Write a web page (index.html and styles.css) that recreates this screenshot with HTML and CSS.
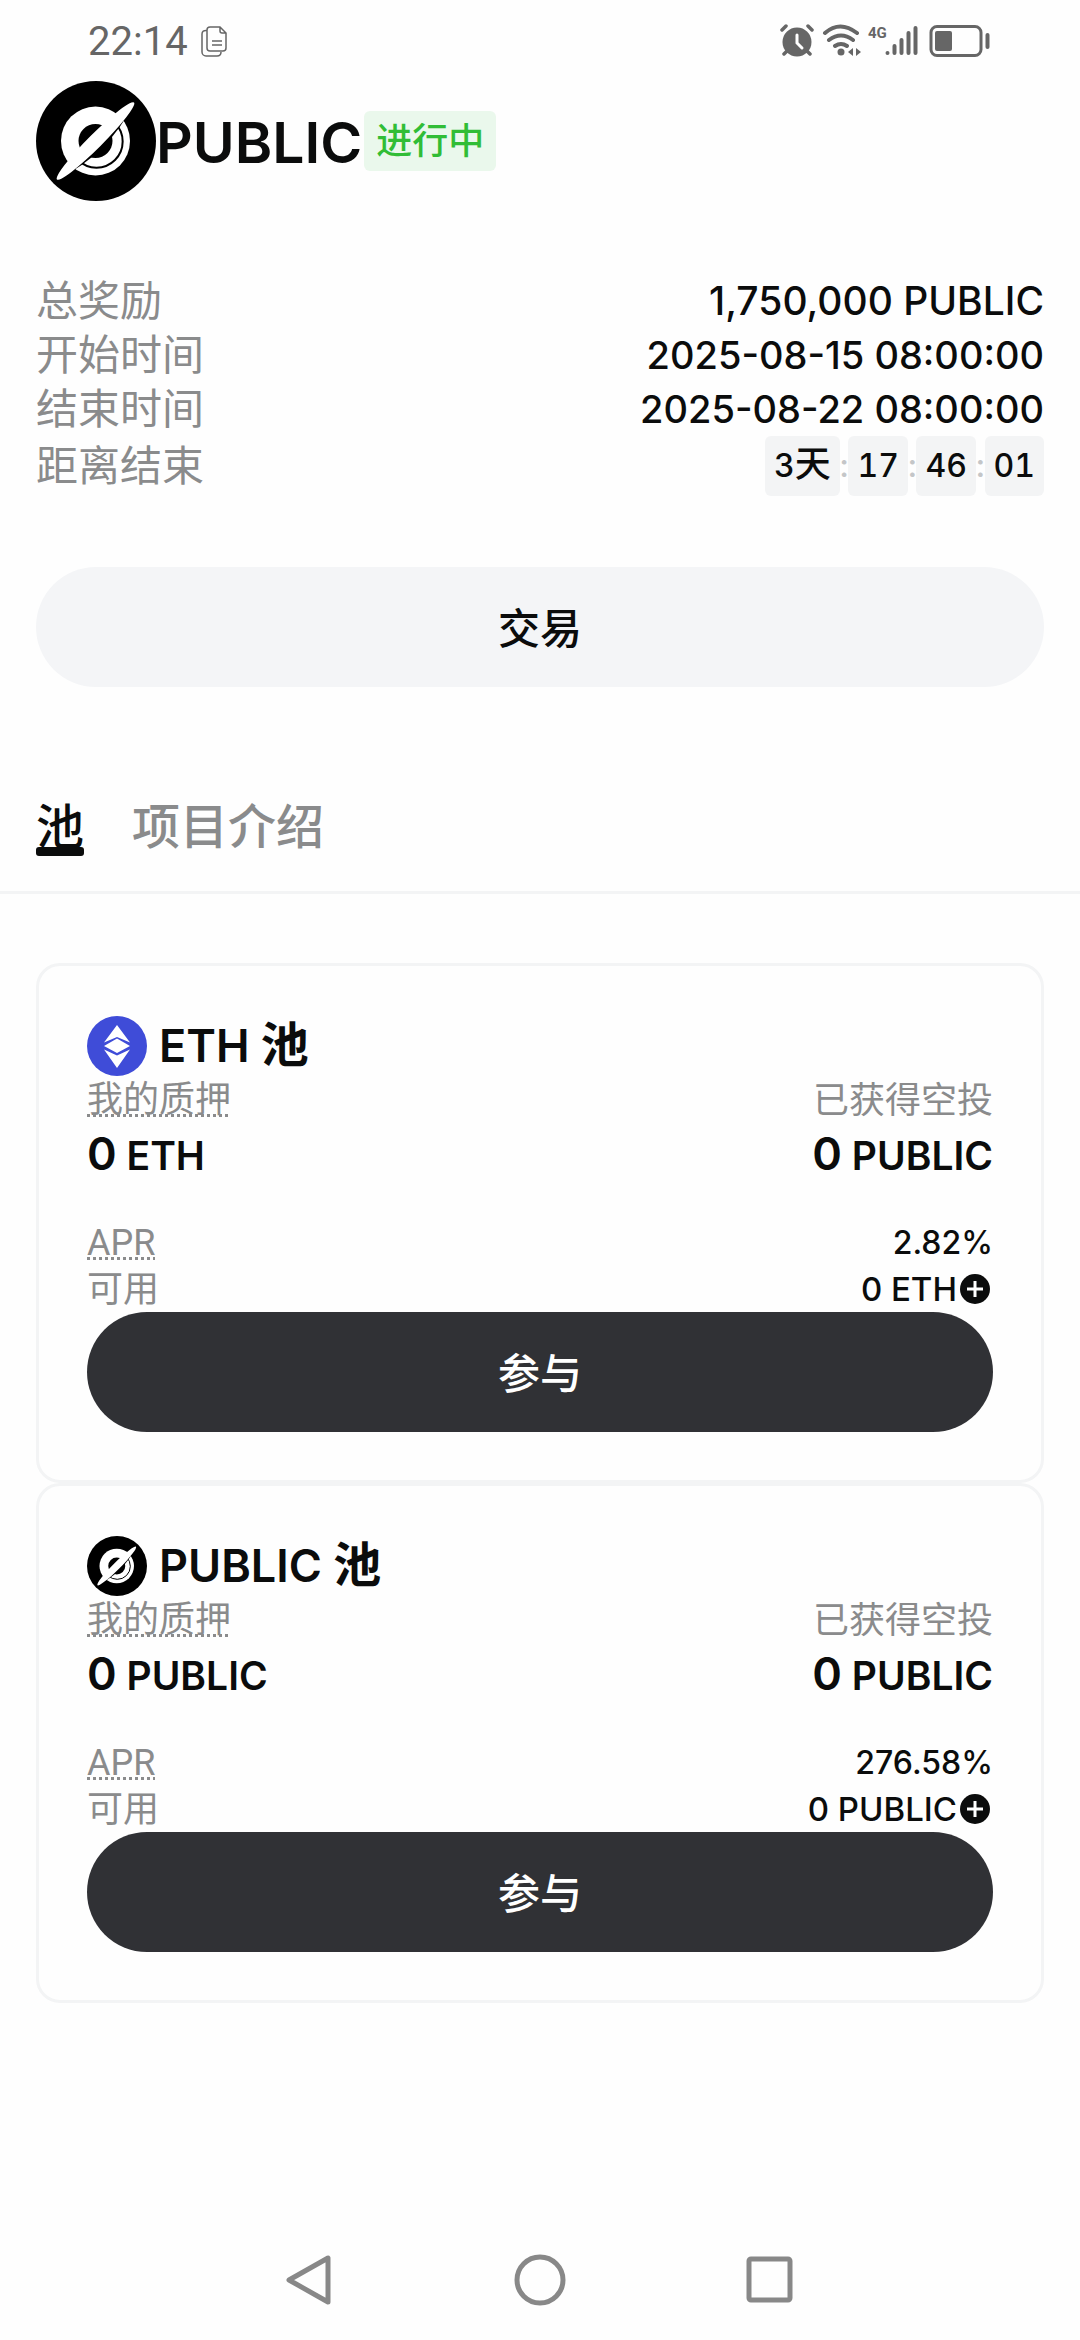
FILE: index.html
```html
<!DOCTYPE html>
<html lang="zh-CN">
<head>
<meta charset="utf-8">
<meta name="viewport" content="width=device-width, initial-scale=1">
<title>PUBLIC</title>
<link rel="stylesheet" href="styles.css">
</head>
<body>
<svg class="defs" aria-hidden="true">
  <symbol id="public-logo" viewBox="0 0 120 120">
    <circle cx="60" cy="60" r="60" fill="#000"/>
    <circle cx="59.500" cy="60" r="34.500" fill="#fff"/>
    <path d="M79 42A26 26 0 0 1 42 79" fill="none" stroke="#000" stroke-width="2"/>
    <circle cx="59.500" cy="60" r="17" fill="#000"/>
    <g transform="rotate(-45 59.500 60)">
      <path d="M5 60Q60 79 114 60" fill="#000"/>
      <ellipse cx="59.500" cy="60" rx="54.500" ry="7" fill="#fff"/>
    </g>
  </symbol>
  <symbol id="plus" viewBox="0 0 36 36">
    <circle cx="18" cy="18" r="15" fill="#0b0c0c"/>
    <path d="M18 10v16M10 18h16" stroke="#fff" stroke-width="3"/>
  </symbol>
</svg>

<header class="status">
  <div class="status-group">
    <time class="clock">22:14</time>
    <svg class="doc" viewBox="0 0 28 32" fill="none" stroke="#666" stroke-width="1.5">
      <path d="M10 2h10l6 6v15a3 3 0 0 1-3 3H10a3 3 0 0 1-3-3V5a3 3 0 0 1 3-3zM20 2v4q0 2 2 2h4M12 16h10M12 20h10M7 5.500Q2 5 2 9v18a4 4 0 0 0 4 4h11q4 0 4-4"/>
    </svg>
  </div>
  <div class="status-group">
    <svg class="status-icons" viewBox="0 0 212 34" fill="none" stroke="#666" stroke-linecap="round">
      <circle cx="17" cy="18" r="14.500" fill="#666" stroke="none"/>
      <path d="M2 6l4-4M32 6l-4-4M4 30l3-3M30 30l-3-3" stroke-width="3.500"/>
      <path d="M17 11v8l5 5" stroke="#fff" stroke-width="3"/>
      <path d="M45 9q15-13 32 0M49 16q12-9 24 0M55 22q6-4 12 0" stroke-width="4"/>
      <circle cx="61" cy="28" r="3.500" fill="#666" stroke="none"/>
      <path d="M73 24v8l-5-4zM76 24v8l5-4z" fill="#666" stroke="none"/>
      <path d="M107.500 29v0M114.500 22v7M121.500 16v13M128.500 9v20M135.500 4v25" stroke-width="4"/>
      <rect x="151" y="2.500" width="50" height="29" rx="6" stroke-width="3"/>
      <rect x="155" y="7" width="17" height="20" rx="2" fill="#666" stroke="none"/>
      <path d="M207.500 11v12" stroke-width="4"/>
      <text class="network" x="88" y="14">4G</text>
    </svg>
  </div>
</header>

<main>
  <section class="project">
    <div class="brand">
      <svg class="brand-logo"><use href="#public-logo"/></svg>
      <h1>PUBLIC</h1>
      <span class="badge">进行中</span>
    </div>
    <dl class="facts">
      <div class="fact"><dt>总奖励</dt><dd>1,750,000 PUBLIC</dd></div>
      <div class="fact"><dt>开始时间</dt><dd class="date">2025-08-15 08:00:00</dd></div>
      <div class="fact"><dt>结束时间</dt><dd class="date">2025-08-22 08:00:00</dd></div>
      <div class="fact"><dt>距离结束</dt>
        <dd class="countdown"><span class="chip">3<span class="unit">天</span></span><i>:</i><span class="chip">17</span><i>:</i><span class="chip">46</span><i>:</i><span class="chip">01</span></dd>
      </div>
    </dl>
    <button class="btn btn-light" type="button">交易</button>
  </section>

  <nav class="tabs">
    <a class="tab active" href="#pools">池</a>
    <a class="tab" href="#about">项目介绍</a>
  </nav>

  <section class="pools" id="pools">
    <article class="card">
      <h2 class="card-title">
        <svg class="coin" viewBox="0 0 60 60">
          <circle cx="30" cy="30" r="30" fill="#3f4cd8"/>
          <path d="M30 9L17 26.500 30 21 43 26.500zM30 22.500L17 30 30 37 43 30zM17 33.500L30 52 43 33.500 30 39.500z" fill="#fff"/>
        </svg>
        <span>ETH <span class="cjk">池</span></span>
      </h2>
      <div class="row labels"><span class="hint">我的质押</span><span>已获得空投</span></div>
      <div class="row values"><span><b>0</b> ETH</span><span><b>0</b> PUBLIC</span></div>
      <div class="row detail"><span class="hint">APR</span><span class="num percent">2.82%</span></div>
      <div class="row detail"><span>可用</span><span class="num">0 ETH<button class="add" type="button" aria-label="充值 ETH"><svg><use href="#plus"/></svg></button></span></div>
      <button class="btn btn-dark" type="button">参与</button>
    </article>
    <article class="card">
      <h2 class="card-title">
        <svg class="coin"><use href="#public-logo"/></svg>
        <span>PUBLIC <span class="cjk">池</span></span>
      </h2>
      <div class="row labels"><span class="hint">我的质押</span><span>已获得空投</span></div>
      <div class="row values"><span><b>0</b> PUBLIC</span><span><b>0</b> PUBLIC</span></div>
      <div class="row detail"><span class="hint">APR</span><span class="num percent">276.58%</span></div>
      <div class="row detail"><span>可用</span><span class="num">0 PUBLIC<button class="add" type="button" aria-label="充值 PUBLIC"><svg><use href="#plus"/></svg></button></span></div>
      <button class="btn btn-dark" type="button">参与</button>
    </article>
  </section>
</main>

<footer class="navbar">
  <button type="button" aria-label="返回"><svg viewBox="0 0 52 52"><path d="M5 26L44 4v44z"/></svg></button>
  <button type="button" aria-label="主屏幕"><svg viewBox="0 0 52 52"><circle cx="26" cy="26" r="23"/></svg></button>
  <button type="button" aria-label="最近任务"><svg viewBox="0 0 52 52"><rect x="5" y="5" width="41" height="41" rx="2"/></svg></button>
</footer>
</body>
</html>
```
FILE: styles.css
```css
:root {
  --ink: #0b0c0c;
  --muted: #8a8b8c;
  --line: #f3f4f5;
  --sans: Inter, "Noto Sans CJK SC", sans-serif;
}

* { box-sizing: border-box; }

body {
  margin: 0;
  min-height: 100vh;
  display: flex;
  flex-direction: column;
  background: #fefefe;
  color: var(--ink);
  font-family: var(--sans);
}

h1, h2, dl, dd { margin: 0; }

button {
  padding: 0;
  border: 0;
  background: none;
  font-family: inherit;
}

.defs {
  position: absolute;
  width: 0;
  height: 0;
}

/* Device status bar */
.status {
  display: flex;
  justify-content: space-between;
  align-items: center;
  height: 81px;
  padding: 0 88px;
}

.status-group { display: flex; align-items: center; gap: 12px; }

.clock {
  padding-top: 3px;
  color: #666;
  font: 400 40px/48px Roboto, sans-serif;
}

.doc { width: 28px; height: 32px; }
.status-icons { width: 212px; height: 34px; }

.network {
  fill: #666;
  stroke: none;
  font: 700 15px Roboto, sans-serif;
}

/* Project summary */
.project { padding: 0 36px; }

.brand { display: flex; align-items: center; }
.brand-logo { width: 120px; height: 120px; }

.brand h1 {
  padding-top: 3px;
  font: 600 57px/72px var(--sans);
}

.badge {
  margin-left: 2px;
  padding: 0 12px;
  border-radius: 6px;
  background: #eaf8ec;
  color: #31bd36;
  font-size: 36px;
  font-weight: 500;
  line-height: 60px;
}

.facts { margin: 73px 0 71px; }

.fact {
  display: flex;
  justify-content: space-between;
  align-items: center;
  line-height: 54px;
}

.fact dt { color: var(--muted); font-size: 42px; }
.fact dd { font-size: 39px; font-weight: 500; }
.fact .date { font-size: 38px; }

.fact .countdown {
  display: flex;
  font-size: 32px;
  font-variant-numeric: tabular-nums;
  line-height: 60px;
}

.countdown i { color: #c4c6c8; font-style: normal; }

.chip {
  padding: 0 9px;
  border-radius: 6px;
  background: #f3f4f5;
}

.unit { font-size: 36px; line-height: 1; }

.btn {
  display: block;
  width: 100%;
  height: 120px;
  padding-bottom: 4px;
  border-radius: 60px;
  font-size: 42px;
  font-weight: 500;
}

.btn-light { background: #f4f5f7; color: var(--ink); }
.btn-dark { background: #303135; color: #fff; }

/* Tabs */
.tabs {
  display: flex;
  gap: 48px;
  margin-top: 96px;
  padding: 12px 36px 35px;
  border-bottom: 3px solid var(--line);
}

.tab {
  position: relative;
  height: 61px;
  color: var(--muted);
  font-size: 48px;
  font-weight: 500;
  line-height: 64px;
  text-decoration: none;
}

.tab.active { color: var(--ink); }

.tab.active::after {
  content: "";
  position: absolute;
  right: 0;
  bottom: 0;
  left: 0;
  height: 9px;
  border-radius: 3px;
  background: var(--ink);
}

/* Pool cards */
.pools { padding: 69px 36px; }

.card {
  padding: 48px;
  border: 3px solid var(--line);
  border-radius: 24px;
}

.card-title {
  display: flex;
  align-items: center;
  gap: 12px;
  height: 63px;
  font: 600 45px/60px var(--sans);
}

.coin { width: 60px; height: 60px; }
.cjk { font-size: 48px; font-weight: 700; line-height: 1; }

.row {
  display: flex;
  justify-content: space-between;
  align-items: center;
  line-height: 46px;
  font-size: 36px;
}

.labels, .detail { color: var(--muted); }

.hint {
  background: repeating-linear-gradient(90deg, var(--muted) 0 3px, transparent 3px 6px) left bottom 6px / 100% 3px no-repeat;
  font-family: Roboto, "Noto Sans CJK SC", sans-serif;
}

.values {
  margin-bottom: 31px;
  font: 600 39px/66px var(--sans);
}

.values b { font-size: 45px; font-weight: 600; line-height: 1; }

.num {
  display: flex;
  align-items: center;
  color: var(--ink);
  font: 500 33px/46px var(--sans);
}

.percent { font-size: 32px; }

.add, .add svg { display: block; width: 36px; height: 36px; }

/* Device navigation */
.navbar {
  display: flex;
  justify-content: center;
  gap: 178px;
  margin-top: auto;
  padding-bottom: 34px;
}

.navbar svg {
  display: block;
  width: 52px;
  height: 52px;
  fill: none;
  stroke: #888;
  stroke-width: 5;
  stroke-linejoin: round;
}
```
